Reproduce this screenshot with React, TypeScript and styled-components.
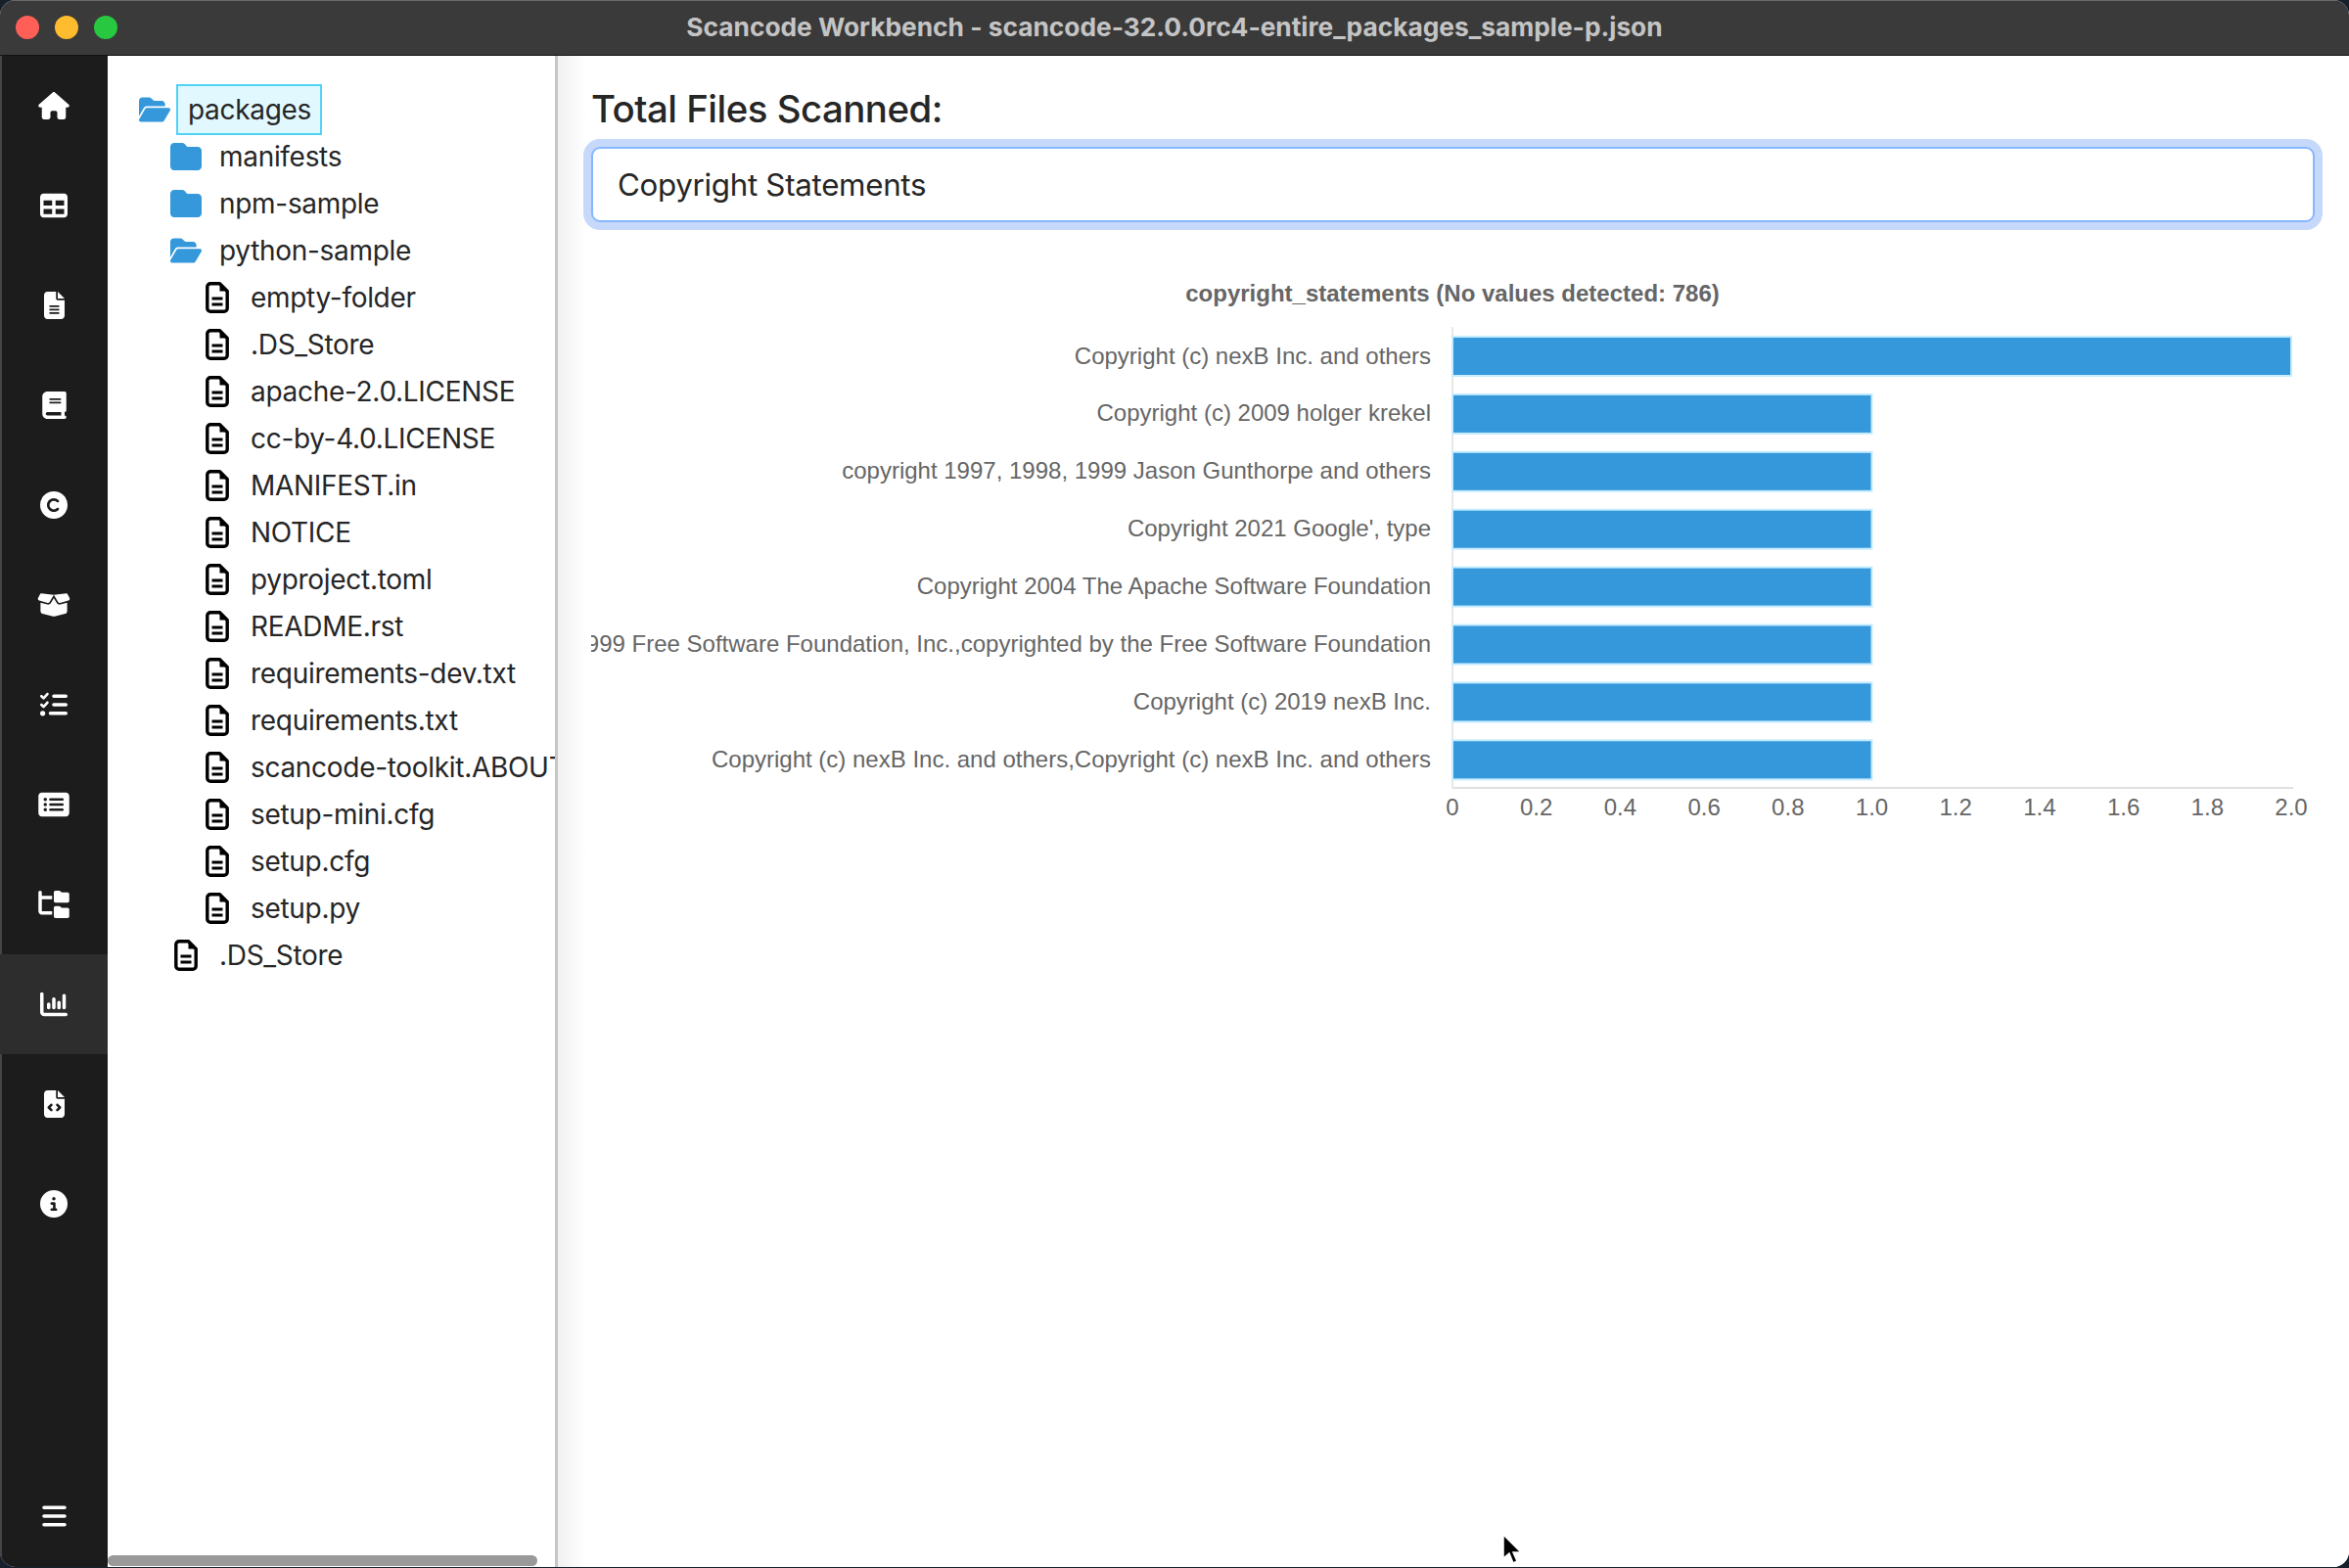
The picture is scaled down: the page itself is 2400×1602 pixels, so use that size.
import React from "react";
import styled, { createGlobalStyle } from "styled-components";
import {
  FaBars,
  FaBook,
  FaBoxOpen,
  FaChartColumn,
  FaCircleInfo,
  FaCopyright,
  FaFileCode,
  FaFileLines,
  FaFolder,
  FaFolderOpen,
  FaFolderTree,
  FaHouse,
  FaListCheck,
  FaRectangleList,
  FaTable,
} from "react-icons/fa6";

const GlobalStyle = createGlobalStyle`
  html, body {
    margin: 0;
    padding: 0;
    background: #17212c;
  }
  * {
    box-sizing: border-box;
  }
`;

const Window = styled.div`
  width: 2400px;
  height: 1601px;
  display: flex;
  flex-direction: column;
  border-radius: 16px;
  overflow: hidden;
  background: #fff;
  position: relative;
`;

const TitleBar = styled.header`
  height: 57px;
  flex: none;
  display: flex;
  align-items: center;
  justify-content: center;
  position: relative;
  background: #3a3a3a;
  border-top: 1px solid #6a6a6a;
  border-bottom: 1px solid #111;
`;

const Lights = styled.div`
  position: absolute;
  left: 16px;
  top: 15px;
  display: flex;
  gap: 16px;
`;

const Light = styled.span<{ $color: string }>`
  width: 24px;
  height: 24px;
  border-radius: 50%;
  background: ${(p) => p.$color};
`;

const WindowTitle = styled.h1`
  margin: 0 0 3px;
  font: 700 26.3px "Inter", sans-serif;
  color: #c4c4c4;
`;

const Body = styled.div`
  flex: 1;
  min-height: 0;
  display: flex;
`;

const Sidebar = styled.nav`
  width: 110px;
  flex: none;
  display: flex;
  flex-direction: column;
  background: #1c1c1c;
  box-shadow: inset 2px 0 0 #464646;
`;

const NavItem = styled.div<{ $active?: boolean; $iconWidth: number }>`
  height: 102px;
  flex: none;
  display: flex;
  align-items: center;
  justify-content: center;
  color: #fff;
  background: ${(p) => (p.$active ? "#2d2d2d" : "transparent")};

  svg {
    height: 28px;
    width: ${(p) => p.$iconWidth}px;
  }
`;

const NavBottom = styled(NavItem)`
  margin-top: auto;
  height: 90px;
  margin-bottom: 7px;
`;

const TreePane = styled.aside`
  width: 460px;
  flex: none;
  position: relative;
  overflow: hidden;
  padding-top: 31px;
  background: #fff;
  border-right: 3px solid #c6c6c6;
`;

const TreeRow = styled.div<{ $depth: number }>`
  height: 48px;
  display: flex;
  align-items: center;
  padding-left: ${(p) => 32 + p.$depth * 32}px;
  white-space: nowrap;
  font: 400 28px "Inter", sans-serif;
  letter-spacing: -0.3px;
  color: #262626;
`;

const IconSlot = styled.span<{ $color: string }>`
  width: 32px;
  height: 32px;
  flex: none;
  display: flex;
  align-items: center;
  justify-content: center;
  font-size: 32px;
  color: ${(p) => p.$color};
`;

const RowLabel = styled.span<{ $selected?: boolean }>`
  margin-left: ${(p) => (p.$selected ? 6 : 18)}px;
  padding: ${(p) => (p.$selected ? "7px 9px 7px 10px" : "0")};
  border: ${(p) => (p.$selected ? "2px solid #4fd3f7" : "none")};
  background: ${(p) => (p.$selected ? "#e2f8ff" : "transparent")};
`;

const ScrollThumb = styled.div`
  position: absolute;
  left: 0;
  bottom: 1px;
  width: 439px;
  height: 11px;
  border-radius: 6px;
  background: #999;
`;

const Main = styled.main`
  flex: 1;
  min-width: 0;
  display: flex;
  flex-direction: column;
  padding: 28px 35px 0 34px;
  background: linear-gradient(90deg, #f1f1f1 0, #fff 30px);
`;

const Heading = styled.h2`
  margin: 0 0 13px;
  height: 52px;
  font: 500 38.4px/52px "Inter", sans-serif;
  letter-spacing: -0.5px;
  color: #262626;
`;

const ChartSelect = styled.div`
  height: 77px;
  display: flex;
  align-items: center;
  padding-left: 25px;
  border: 2px solid #86b7fe;
  border-radius: 9px;
  background: #fff;
  box-shadow: 0 0 0 8px #c6d9fb;
  font: 400 31.3px "Inter", sans-serif;
  letter-spacing: -0.3px;
  color: #262626;
`;

const ChartFrame = styled.svg`
  display: block;
  flex: none;
  width: 1762px;
  height: 640px;
  margin-top: 47px;
`;

const Cursor = styled.svg`
  position: absolute;
  left: 1533px;
  top: 1566px;
`;

const navIcons = [
  { Icon: FaHouse, width: 32 },
  { Icon: FaTable, width: 28 },
  { Icon: FaFileLines, width: 21 },
  { Icon: FaBook, width: 25 },
  { Icon: FaCopyright, width: 28 },
  { Icon: FaBoxOpen, width: 34 },
  { Icon: FaListCheck, width: 28 },
  { Icon: FaRectangleList, width: 32 },
  { Icon: FaFolderTree, width: 32 },
  { Icon: FaChartColumn, width: 28 },
  { Icon: FaFileCode, width: 21 },
  { Icon: FaCircleInfo, width: 28 },
];

type Node = { name: string; kind: "open" | "folder" | "file"; depth: number };

const tree: Node[] = [
  { name: "manifests", kind: "folder", depth: 1 },
  { name: "npm-sample", kind: "folder", depth: 1 },
  { name: "python-sample", kind: "open", depth: 1 },
  { name: "empty-folder", kind: "file", depth: 2 },
  { name: ".DS_Store", kind: "file", depth: 2 },
  { name: "apache-2.0.LICENSE", kind: "file", depth: 2 },
  { name: "cc-by-4.0.LICENSE", kind: "file", depth: 2 },
  { name: "MANIFEST.in", kind: "file", depth: 2 },
  { name: "NOTICE", kind: "file", depth: 2 },
  { name: "pyproject.toml", kind: "file", depth: 2 },
  { name: "README.rst", kind: "file", depth: 2 },
  { name: "requirements-dev.txt", kind: "file", depth: 2 },
  { name: "requirements.txt", kind: "file", depth: 2 },
  { name: "scancode-toolkit.ABOUT", kind: "file", depth: 2 },
  { name: "setup-mini.cfg", kind: "file", depth: 2 },
  { name: "setup.cfg", kind: "file", depth: 2 },
  { name: "setup.py", kind: "file", depth: 2 },
  { name: ".DS_Store", kind: "file", depth: 1 },
];

const bars = [
  { label: "Copyright (c) nexB Inc. and others", value: 2 },
  { label: "Copyright (c) 2009 holger krekel", value: 1 },
  { label: "copyright 1997, 1998, 1999 Jason Gunthorpe and others", value: 1 },
  { label: "Copyright 2021 Google', type", value: 1 },
  { label: "Copyright 2004 The Apache Software Foundation", value: 1 },
  {
    label: "Copyright (c) 1999 Free Software Foundation, Inc.,copyrighted by the Free Software Foundation",
    value: 1,
  },
  { label: "Copyright (c) 2019 nexB Inc.", value: 1 },
  { label: "Copyright (c) nexB Inc. and others,Copyright (c) nexB Inc. and others", value: 1 },
];

const ticks = ["0", "0.2", "0.4", "0.6", "0.8", "1.0", "1.2", "1.4", "1.6", "1.8", "2.0"];

const chartFont = '"Liberation Sans", Arial, sans-serif';
const originX = 880;
const unit = 428.5;

function Chart() {
  return (
    <ChartFrame viewBox="0 0 1762 640">
      <text x={880} y={34} textAnchor="middle" fontFamily={chartFont} fontSize={24} fontWeight={700} fill="#666">
        copyright_statements (No values detected: 786)
      </text>
      <line x1={originX} y1={60} x2={originX} y2={531} stroke="#e0e0e0" strokeWidth={1.5} />
      <line x1={originX} y1={531} x2={originX + unit * 2 + 2} y2={531} stroke="#e0e0e0" strokeWidth={2} />
      {bars.map((bar, i) => (
        <g key={bar.label}>
          <text x={858} y={97.5 + i * 58.9} textAnchor="end" fontFamily={chartFont} fontSize={24} fill="#666">
            {bar.label}
          </text>
          <rect
            x={originX}
            y={70 + i * 58.9}
            width={bar.value * unit}
            height={40}
            fill="#3498db"
            stroke="#c5ecff"
            strokeWidth={2}
          />
        </g>
      ))}
      {ticks.map((tick, i) => (
        <text
          key={tick}
          x={originX + (i * unit) / 5}
          y={559}
          textAnchor="middle"
          fontFamily={chartFont}
          fontSize={24}
          fill="#666"
        >
          {tick}
        </text>
      ))}
    </ChartFrame>
  );
}

function FileGlyph() {
  return (
    <svg width="24" height="32" viewBox="0 0 24 32" fill="none">
      <path
        d="M5 1.8 H14.5 L22.2 9.5 V27 A3.2 3.2 0 0 1 19 30.2 H5 A3.2 3.2 0 0 1 1.8 27 V5 A3.2 3.2 0 0 1 5 1.8 Z"
        stroke="#000"
        strokeWidth="3.4"
        strokeLinejoin="round"
      />
      <path d="M14.5 2 L22 9.5 H14.5 Z" fill="#000" />
      <rect x="6.5" y="15.5" width="11" height="3" fill="#000" />
      <rect x="6.5" y="21.5" width="11" height="3" fill="#000" />
    </svg>
  );
}

function TreeIcon({ kind }: { kind: Node["kind"] }) {
  if (kind === "file") {
    return (
      <IconSlot $color="#000">
        <FileGlyph />
      </IconSlot>
    );
  }
  return <IconSlot $color="#3498db">{kind === "open" ? <FaFolderOpen /> : <FaFolder />}</IconSlot>;
}

export default function App() {
  return (
    <>
      <GlobalStyle />
      <Window>
        <TitleBar>
          <Lights>
            <Light $color="#ff5f57" />
            <Light $color="#febc2e" />
            <Light $color="#28c840" />
          </Lights>
          <WindowTitle>Scancode Workbench - scancode-32.0.0rc4-entire_packages_sample-p.json</WindowTitle>
        </TitleBar>
        <Body>
          <Sidebar>
            {navIcons.map(({ Icon, width }, i) => (
              <NavItem key={i} $active={i === 9} $iconWidth={width}>
                <Icon />
              </NavItem>
            ))}
            <NavBottom $iconWidth={25}>
              <FaBars />
            </NavBottom>
          </Sidebar>
          <TreePane>
            <TreeRow $depth={0}>
              <TreeIcon kind="open" />
              <RowLabel $selected>packages</RowLabel>
            </TreeRow>
            {tree.map((node, i) => (
              <TreeRow key={i} $depth={node.depth}>
                <TreeIcon kind={node.kind} />
                <RowLabel>{node.name}</RowLabel>
              </TreeRow>
            ))}
            <ScrollThumb />
          </TreePane>
          <Main>
            <Heading>Total Files Scanned:</Heading>
            <ChartSelect>Copyright Statements</ChartSelect>
            <Chart />
          </Main>
        </Body>
        <Cursor width="24" height="34" viewBox="0 0 24 34">
          <path d="M3 2 L3 26 L9 21 L13 31 L17 29 L13 20 L21 20 Z" fill="#000" stroke="#fff" strokeWidth="1.5" />
        </Cursor>
      </Window>
    </>
  );
}
